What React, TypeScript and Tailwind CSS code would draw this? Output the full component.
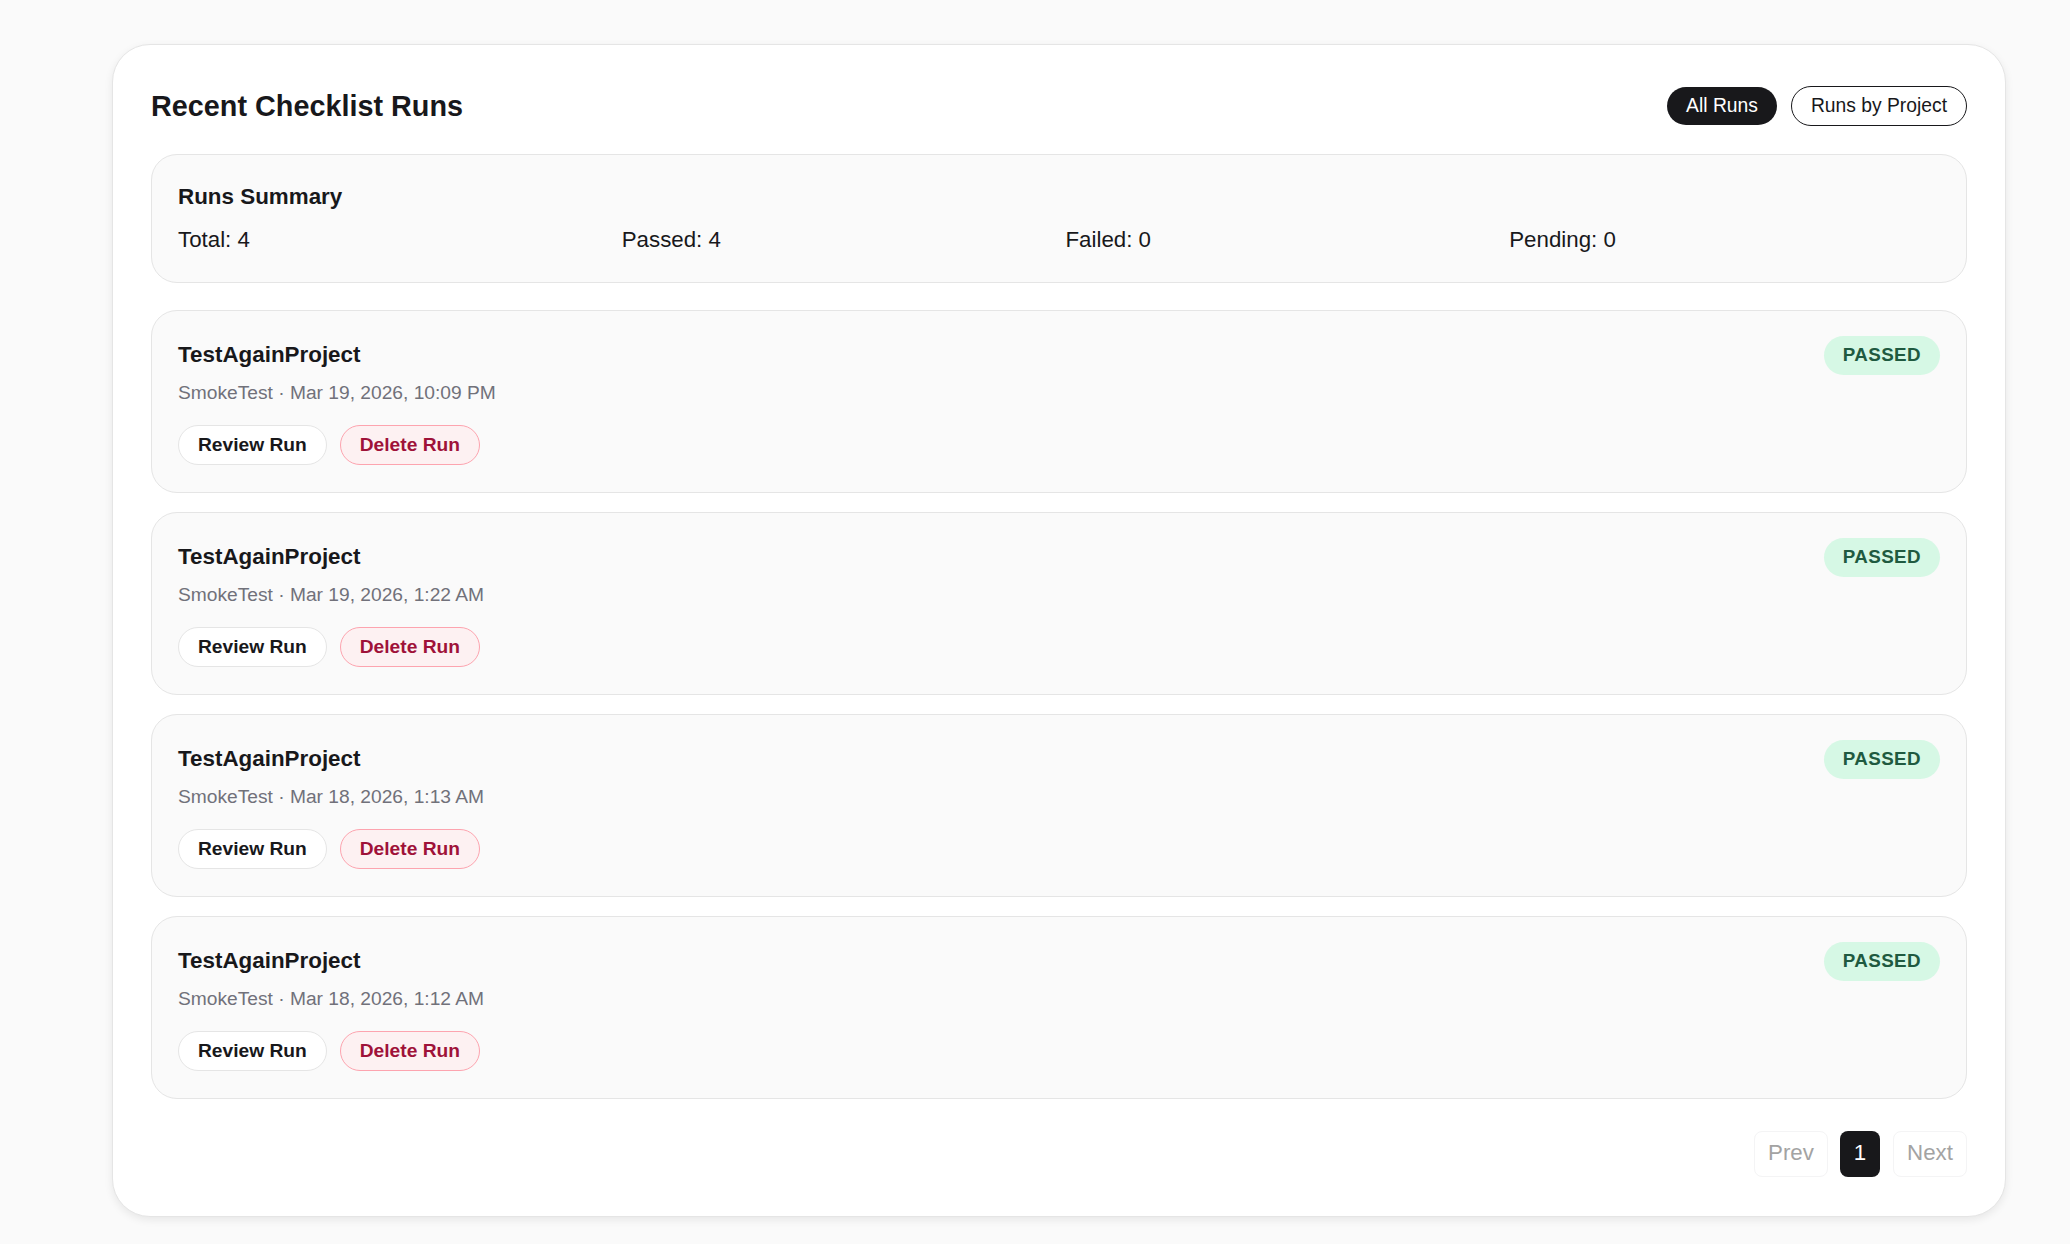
const RUNS = [
  "SmokeTest · Mar 19, 2026, 10:09 PM",
  "SmokeTest · Mar 19, 2026, 1:22 AM",
  "SmokeTest · Mar 18, 2026, 1:13 AM",
  "SmokeTest · Mar 18, 2026, 1:12 AM",
];

const SUMMARY = ["Total: 4", "Passed: 4", "Failed: 0", "Pending: 0"];

function RunCard({ meta }: { meta: string }) {
  return (
    <div className="flex h-[183px] items-start justify-between rounded-[26px] border border-[#e5e5e5] bg-[#fafafa] px-[26px] pt-[26px]">
      <div>
        <h3 className="text-[22.4px] leading-[36px] font-bold text-[#18181b]">TestAgainProject</h3>
        <p className="mt-[5px] text-[19.2px] leading-[30px] text-[#71717a]">{meta}</p>
        <div className="mt-[17px] flex gap-[13px]">
          <button type="button" className="h-[40px] rounded-full border border-[#e5e5e5] bg-white px-[19px] text-[19.2px] font-bold text-[#18181b]">
            Review Run
          </button>
          <button type="button" className="h-[40px] rounded-full border border-[#fda4af] bg-[#fdf1f2] px-[19px] text-[19.2px] font-bold text-[#9f1239]">
            Delete Run
          </button>
        </div>
      </div>
      <span className="-mt-[1px] flex h-[39px] items-center rounded-full bg-[#d6f8e5] px-[19px] text-[18.8px] font-bold tracking-[0.4px] text-[#1f5a40]">
        PASSED
      </span>
    </div>
  );
}

export default function App() {
  return (
    <main className="min-h-screen bg-[#fafafa] pt-[44px] pr-[64px] pb-[26px] pl-[112px] font-['Liberation_Sans',Arial,sans-serif]">
      <div className="rounded-[38px] border border-[#e5e5e5] bg-white px-[38px] pt-[40px] pb-[39px] shadow-[0_3px_8px_rgba(0,0,0,0.08)]">
        {/* Header */}
        <div className="flex h-[42px] items-center justify-between">
          <h1 className="pt-[1px] text-[28.8px] font-bold text-[#18181b]">Recent Checklist Runs</h1>
          <div className="flex items-center gap-[14px]">
            <button type="button" className="h-[38px] rounded-full bg-[#18181b] px-[19px] text-[19.3px] text-white">
              All Runs
            </button>
            <button type="button" className="h-[40px] rounded-full border border-[#18181b] bg-white px-[19px] text-[19.3px] text-[#18181b]">
              Runs by Project
            </button>
          </div>
        </div>

        {/* Summary */}
        <div className="mt-[27px] h-[129px] rounded-[26px] border border-[#e5e5e5] bg-[#fafafa] px-[26px] pt-[24px]">
          <h2 className="text-[22.4px] leading-[36px] font-bold text-[#18181b]">Runs Summary</h2>
          <div className="mt-[7px] grid grid-cols-4 gap-[13px] text-[22.3px] leading-[36px] text-[#18181b]">
            {SUMMARY.map((s) => (
              <div key={s}>{s}</div>
            ))}
          </div>
        </div>

        {/* Runs */}
        <div className="mt-[27px] flex flex-col gap-[19px]">
          {RUNS.map((m) => (
            <RunCard key={m} meta={m} />
          ))}
        </div>

        {/* Pagination */}
        <div className="mt-[32px] flex items-center justify-end gap-[12px]">
          <button type="button" className="h-[46px] w-[74px] rounded-[8px] border border-[#f4f4f5] bg-white pb-[2px] text-[22.3px] text-[#a3a3a3]">
            Prev
          </button>
          <button type="button" className="h-[46px] w-[40px] rounded-[8px] bg-[#18181b] pb-[2px] text-[22.3px] text-white">
            1
          </button>
          <button type="button" className="ml-[1px] h-[46px] w-[74px] rounded-[8px] border border-[#f4f4f5] bg-white pb-[2px] text-[22.3px] text-[#a3a3a3]">
            Next
          </button>
        </div>
      </div>
    </main>
  );
}
